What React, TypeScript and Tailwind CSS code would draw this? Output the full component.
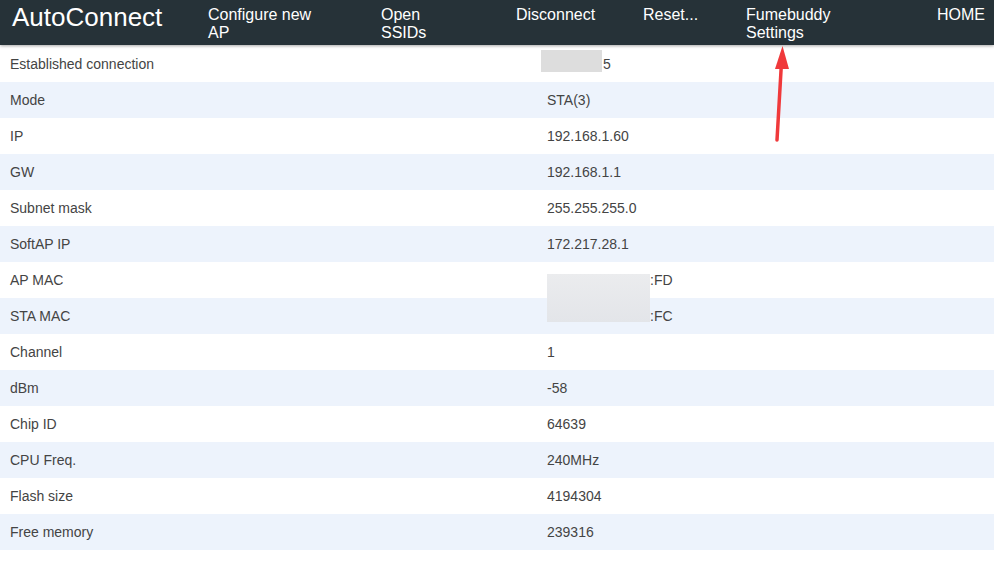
const rows: [string, string][] = [
  ["Established connection", "5"],
  ["Mode", "STA(3)"],
  ["IP", "192.168.1.60"],
  ["GW", "192.168.1.1"],
  ["Subnet mask", "255.255.255.0"],
  ["SoftAP IP", "172.217.28.1"],
  ["AP MAC", ":FD"],
  ["STA MAC", ":FC"],
  ["Channel", "1"],
  ["dBm", "-58"],
  ["Chip ID", "64639"],
  ["CPU Freq.", "240MHz"],
  ["Flash size", "4194304"],
  ["Free memory", "239316"],
];

function Value({ label, value }: { label: string; value: string }) {
  if (label === "Established connection") {
    return (
      <span>
        <span className="inline-block w-[56px]" />
        {value}
      </span>
    );
  }
  if (label === "AP MAC" || label === "STA MAC") {
    return (
      <span>
        <span className="inline-block w-[103px]" />
        {value}
      </span>
    );
  }
  return <span>{value}</span>;
}

export default function App() {
  return (
    <div
      className="relative w-[994px] h-[566px] bg-white overflow-hidden"
      style={{ fontFamily: '"Liberation Sans", Arial, sans-serif' }}
    >
      <header className="flex h-[45px] bg-[#263238] text-white shadow-[0_1px_3px_rgba(0,0,0,0.35)] relative z-10">
        <div className="w-[208px] pl-[12px] pt-[1px] text-[26px] leading-[32px]">AutoConnect</div>
        <div className="w-[173px] pt-[6px] text-[16px] leading-[18px]">
          <div className="w-[110px]">Configure new AP</div>
        </div>
        <div className="w-[135px] pt-[6px] text-[16px] leading-[18px]">
          <div className="w-[60px]">Open SSIDs</div>
        </div>
        <div className="w-[127px] pt-[6px] text-[16px] leading-[18px]">Disconnect</div>
        <div className="w-[103px] pt-[6px] text-[16px] leading-[18px]">Reset...</div>
        <div className="flex-1 pt-[6px] text-[16px] leading-[18px]">
          <div className="w-[90px]">Fumebuddy Settings</div>
        </div>
        <div className="pr-[9px] pt-[6px] text-[16px] leading-[18px]">HOME</div>
      </header>

      <div className="relative mt-[1px]">
        {rows.map(([label, value], i) => (
          <div
            key={label}
            className={`flex h-[36px] items-center text-[14px] text-[#444] ${
              i % 2 === 1 ? "bg-[#edf3fc]" : "bg-white"
            }`}
          >
            <div className="w-[547px] pl-[10px]">{label}</div>
            <div>
              <Value label={label} value={value} />
            </div>
          </div>
        ))}

        <div className="absolute left-[541px] top-[4px] w-[61px] h-[22px] bg-[#dddddd]" />
        <div className="absolute left-[547px] top-[228px] w-[103px] h-[48px] bg-gradient-to-b from-[#ebecee] to-[#e3e5e9]" />
      </div>

      <svg className="absolute left-0 top-0 z-20" width="994" height="566" viewBox="0 0 994 566">
        <line x1="777" y1="140" x2="781.5" y2="62" stroke="#f0393b" strokeWidth="3.5" strokeLinecap="round" />
        <polygon points="782.5,46 775,69 789,69" fill="#f0393b" />
      </svg>
    </div>
  );
}
